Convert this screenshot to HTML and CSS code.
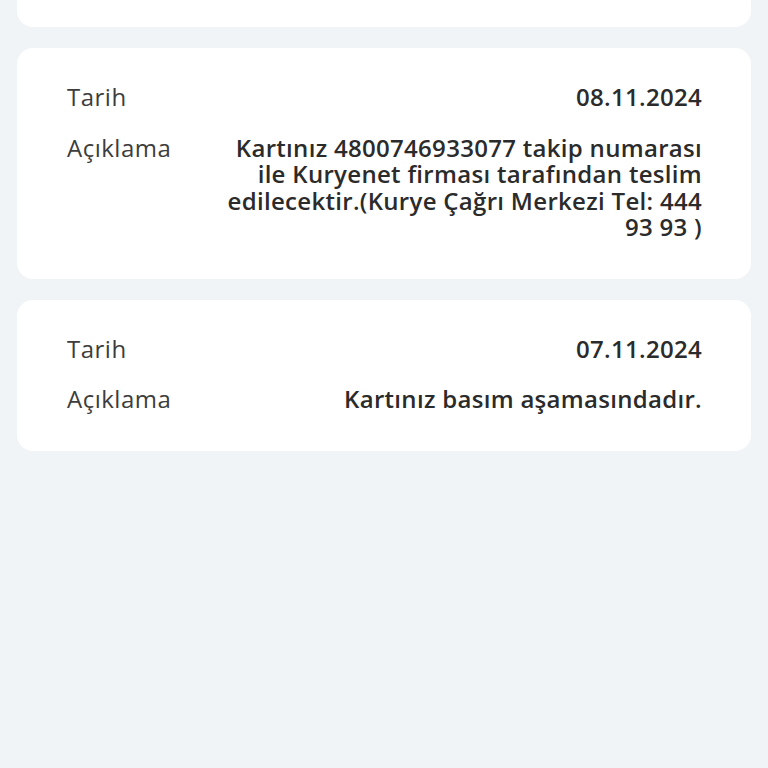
FILE: index.html
```html
<!DOCTYPE html>
<html lang="tr">
<head>
  <meta charset="UTF-8" />
  <meta name="viewport" content="width=device-width, initial-scale=1.0"/>
  <title>Kart Takibi</title>
  <link rel="stylesheet" href="styles.css">
</head>
<body>
  <div class="list">
    <div class="card card-cut"></div>

    <div class="card">
      <div class="row">
        <div class="label">Tarih</div>
        <div class="value">08.11.2024</div>
      </div>
      <div class="row">
        <div class="label">Açıklama</div>
        <div class="value">Kartınız 4800746933077 takip numarası ile Kuryenet firması tarafından teslim edilecektir.(Kurye Çağrı Merkezi Tel: 444 93 93 )</div>
      </div>
    </div>

    <div class="card">
      <div class="row">
        <div class="label">Tarih</div>
        <div class="value">07.11.2024</div>
      </div>
      <div class="row">
        <div class="label">Açıklama</div>
        <div class="value">Kartınız basım aşamasındadır.</div>
      </div>
    </div>
  </div>
</body>
</html>
```

FILE: styles.css
```css
body {
  margin: 0;
  background: #f1f4f6;
  font-family: 'Open Sans', 'Noto Sans', sans-serif;
  color: #2e2e2e;
}

.list {
  display: flex;
  flex-direction: column;
  gap: 21px;
  padding: 0 17px;
}

.card {
  background: #fff;
  border-radius: 16px;
  padding: 36px 49px 38px 50px;
  display: flex;
  flex-direction: column;
  gap: 24px;
}

.card-cut {
  height: 27px;
  padding: 0;
  border-radius: 0 0 16px 16px;
}

.row {
  display: grid;
  grid-template-columns: 150px 1fr;
  font-size: 24px;
  line-height: 26.5px;
}

.label {
  color: #3d3d3d;
  letter-spacing: 0.5px;
}

.value {
  max-width: 481px;
  justify-self: end;
  text-align: right;
  font-weight: 600;
  color: #2b2b2b;
  letter-spacing: 0.3px;
}
```
